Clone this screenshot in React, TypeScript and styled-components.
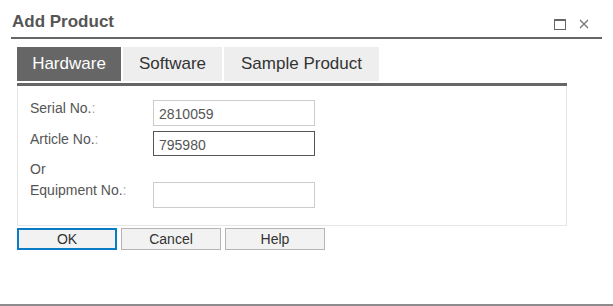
import React from "react";
import styled, { createGlobalStyle } from "styled-components";

const Global = createGlobalStyle`
  html, body { margin: 0; padding: 0; background: #fff; }
  body { font-family: "Liberation Sans", Arial, sans-serif; }
  * { box-sizing: border-box; }
`;

const Dialog = styled.div`
  width: 613px;
  height: 306px;
  background: #fff;
  border-bottom: 2px solid #8c8c8c;
  padding: 0 11px;
`;

const Header = styled.div`
  height: 39px;
  display: flex;
  align-items: flex-start;
  justify-content: space-between;
  border-bottom: 2px solid #666;
  padding: 12px 13px 0 1px;
`;

const Title = styled.h1`
  margin: 0;
  font-size: 17px;
  line-height: 20px;
  font-weight: bold;
  color: #555;
`;

const WinButtons = styled.div`
  display: flex;
  gap: 13px;
  margin-top: 7px;
`;

const Body = styled.div`
  width: 550px;
  margin: 8px 0 0 6px;
`;

const TabList = styled.div`
  display: flex;
  gap: 2px;
  margin-bottom: 2px;
`;

const Tab = styled.div<{ $active?: boolean; $width: number }>`
  width: ${(p) => p.$width}px;
  height: 34px;
  display: flex;
  align-items: center;
  justify-content: center;
  font-size: 17px;
  background: ${(p) => (p.$active ? "#666" : "#eee")};
  color: ${(p) => (p.$active ? "#fff" : "#333")};
`;

const TabBar = styled.div`
  height: 3px;
  background: #666;
`;

const Panel = styled.div`
  border: 1px solid #e6e6e6;
  border-top: none;
  padding: 14px 12px 17px 12px;
`;

const Form = styled.div`
  display: grid;
  grid-template-columns: 123px 162px;
  row-gap: 5px;
  align-items: start;
`;

const Label = styled.div<{ $full?: boolean }>`
  font-size: 14px;
  line-height: 16px;
  color: #555;
  grid-column: ${(p) => (p.$full ? "1 / -1" : "auto")};
`;

const Colon = styled.span`
  color: #aaa;
`;

const Input = styled.input<{ $focused?: boolean }>`
  width: 162px;
  height: ${(p) => (p.$focused ? 25 : 26)}px;
  padding: 2px 5px 0;
  border: 1px solid ${(p) => (p.$focused ? "#555" : "#ccc")};
  font-family: "Liberation Sans", Arial, sans-serif;
  font-size: 14px;
  color: #555;
  outline: none;
  background: #fff;
`;

const Buttons = styled.div`
  display: flex;
  gap: 4px;
  margin-top: 2px;
`;

const Button = styled.button<{ $primary?: boolean }>`
  width: 100px;
  height: 22px;
  padding: 0;
  font-family: "Liberation Sans", Arial, sans-serif;
  font-size: 14px;
  color: #333;
  background: #f2f2f2;
  border: ${(p) => (p.$primary ? "2px solid #0a7cc4" : "1px solid #b5b5b5")};
`;

const MaxIcon = () => (
  <svg width="12" height="11" viewBox="0 0 12 11">
    <rect x="0.5" y="0.5" width="11" height="10" fill="none" stroke="#666" />
    <rect x="0" y="0" width="12" height="2" fill="#666" />
  </svg>
);

const CloseIcon = () => (
  <svg width="10" height="10" viewBox="0 0 10 10">
    <path d="M1 1 L9 9 M9 1 L1 9" stroke="#777" strokeWidth="1.3" />
  </svg>
);

export default function App() {
  return (
    <>
      <Global />
      <Dialog>
        <Header>
          <Title>Add Product</Title>
          <WinButtons>
            <MaxIcon />
            <CloseIcon />
          </WinButtons>
        </Header>
        <Body>
          <TabList>
            <Tab $active $width={104}>Hardware</Tab>
            <Tab $width={99}>Software</Tab>
            <Tab $width={155}>Sample Product</Tab>
          </TabList>
          <TabBar />
          <Panel>
            <Form>
              <Label>
                Serial No.<Colon>:</Colon>
              </Label>
              <Input defaultValue="2810059" />
              <Label>
                Article No.<Colon>:</Colon>
              </Label>
              <Input $focused defaultValue="795980" />
              <Label $full>Or</Label>
              <Label>
                Equipment No.<Colon>:</Colon>
              </Label>
              <Input defaultValue="" />
            </Form>
          </Panel>
          <Buttons>
            <Button $primary>OK</Button>
            <Button>Cancel</Button>
            <Button>Help</Button>
          </Buttons>
        </Body>
      </Dialog>
    </>
  );
}
